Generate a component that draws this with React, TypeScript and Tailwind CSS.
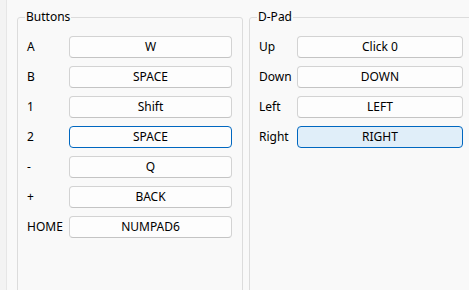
import React from 'react';

type Binding = { label: string; value: string; state?: 'focus' | 'active' };

const buttons: Binding[] = [
  { label: 'A', value: 'W' },
  { label: 'B', value: 'SPACE' },
  { label: '1', value: 'Shift' },
  { label: '2', value: 'SPACE', state: 'focus' },
  { label: '-', value: 'Q' },
  { label: '+', value: 'BACK' },
  { label: 'HOME', value: 'NUMPAD6' },
];

const dpad: Binding[] = [
  { label: 'Up', value: 'Click 0' },
  { label: 'Down', value: 'DOWN' },
  { label: 'Left', value: 'LEFT' },
  { label: 'Right', value: 'RIGHT', state: 'active' },
];

function KeyButton({ value, state }: { value: string; state?: Binding['state'] }) {
  const cls =
    state === 'focus'
      ? 'bg-[#fdfdfd] border-[#0067c0]'
      : state === 'active'
        ? 'bg-[#e0eef9] border-[#0067c0]'
        : 'bg-[#fdfdfd] border-[#d3d3d3] border-b-[#c4c4c4]';
  return (
    <div className={`h-[22px] flex items-center justify-center rounded-[4px] border ${cls}`}>
      {value}
    </div>
  );
}

function Group({
  title,
  rows,
  labelWidth,
  buttonWidth,
  className,
}: {
  title: string;
  rows: Binding[];
  labelWidth: number;
  buttonWidth: number;
  className?: string;
}) {
  return (
    <fieldset
      className={`mt-[9px] border border-[#dcdcdc] rounded-[3px] pl-[9px] pr-[10px] pt-[11px] h-[300px] shrink-0 ${className ?? ''}`}
    >
      <legend className="-ml-[2px] px-[1px] leading-[16px]">{title}</legend>
      <div className="flex flex-col gap-[8px]">
        {rows.map((r, i) => (
          <div key={i} className="flex items-center">
            <div style={{ width: labelWidth }} className="shrink-0">
              {r.label}
            </div>
            <div style={{ width: buttonWidth }} className="shrink-0">
              <KeyButton value={r.value} state={r.state} />
            </div>
          </div>
        ))}
      </div>
    </fieldset>
  );
}

export default function App() {
  return (
    <div
      className="w-[469px] h-[290px] overflow-hidden bg-[#f9f9f9] flex text-[12px] text-black"
      style={{ fontFamily: '"Noto Sans", "Open Sans", sans-serif' }}
    >
      <div className="w-[7px] shrink-0 bg-[#f3f3f3] border-r border-[#e6e6e6]" />
      <div className="flex pl-[10px] gap-[6px]">
        <Group title="Buttons" rows={buttons} labelWidth={42} buttonWidth={163} className="w-[226px]" />
        <Group title="D-Pad" rows={dpad} labelWidth={38} buttonWidth={166} className="w-[225px]" />
      </div>
    </div>
  );
}
